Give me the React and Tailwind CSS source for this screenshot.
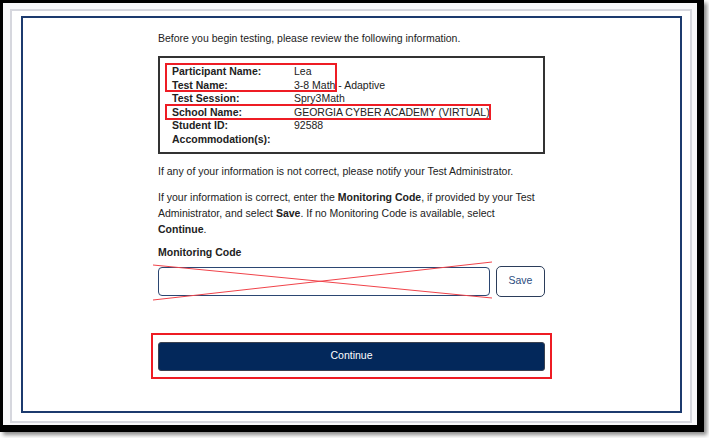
import React from 'react';

const rows = [
  ['Participant Name:', 'Lea'],
  ['Test Name:', '3-8 Math - Adaptive'],
  ['Test Session:', 'Spry3Math'],
  ['School Name:', 'GEORGIA CYBER ACADEMY (VIRTUAL)'],
  ['Student ID:', '92588'],
  ['Accommodation(s):', ''],
];

const App = () => {
  return (
    <div className="w-[709px] h-[438px] bg-white text-[#222] font-['Liberation_Sans',Arial,sans-serif] text-[10.5px]">
      <div className="w-[704px] h-[432px] bg-black pt-[3px] pl-[3px] shadow-[3px_3px_4px_rgba(0,0,0,0.45)]">
        <div className="w-[694px] h-[422px] bg-[#f8f8fa] pt-[6px] pl-[7px]">
          <div className="w-[682px] h-[414px] bg-white border-2 border-[#d6d7de] pt-[5px] pl-[9px]">
            <div className="w-[661px] h-[397px] border-2 border-[#1c3a6e] pt-[13px]">
              <div className="w-[387px] mx-auto">
                <p className="leading-[14px]">Before you begin testing, please review the following information.</p>

                <div className="relative mt-[11px] border-2 border-[#333] pt-[7px] pb-[5px] pl-[12px]">
                  {rows.map(([label, value]) => (
                    <div key={label} className="flex leading-[13.6px]">
                      <span className="w-[122px] font-bold">{label}</span>
                      <span>{value}</span>
                    </div>
                  ))}
                  <div className="absolute left-[5px] top-[5px] w-[172px] h-[29px] border-2 border-[#ee1c24]" />
                  <div className="absolute left-[5px] top-[46px] w-[326px] h-[16px] border-2 border-[#ee1c24]" />
                </div>

                <p className="mt-[9px] leading-[16px]">If any of your information is not correct, please notify your Test Administrator.</p>
                <p className="mt-[10px] leading-[16px]">
                  If your information is correct, enter the <b>Monitoring Code</b>, if provided by your Test Administrator, and select <b>Save</b>. If no Monitoring Code is available, select <b>Continue</b>.
                </p>
                <p className="mt-[7px] leading-[16px] font-bold">Monitoring Code</p>

                <div className="relative mt-[6px] flex items-center gap-[6px]">
                  <div className="w-[332px] h-[29px] rounded-[4px] border-[1.5px] border-[#2b4672] bg-white" />
                  <button className="w-[49px] h-[31px] rounded-[5px] border-[1.5px] border-[#2b3d5a] bg-white text-[#2b4c7e] text-[10.5px]">
                    Save
                  </button>
                  <svg className="absolute left-[-5px] top-[-4px] overflow-visible" width="339" height="40">
                    <line x1="0" y1="3" x2="339" y2="36" stroke="#f0434a" strokeWidth="1" />
                    <line x1="0" y1="38" x2="339" y2="0" stroke="#f0434a" strokeWidth="1" />
                  </svg>
                </div>

                <div className="relative mt-[45px]">
                  <button className="w-full h-[29px] rounded-[3px] bg-[#03285b] border border-[#3a4150] text-white text-[10.5px]">
                    Continue
                  </button>
                  <div className="absolute left-[-7px] top-[-9px] w-[401px] h-[46px] border-2 border-[#ee1c24]" />
                </div>
              </div>
            </div>
          </div>
        </div>
      </div>
    </div>
  );
};

export default App;
